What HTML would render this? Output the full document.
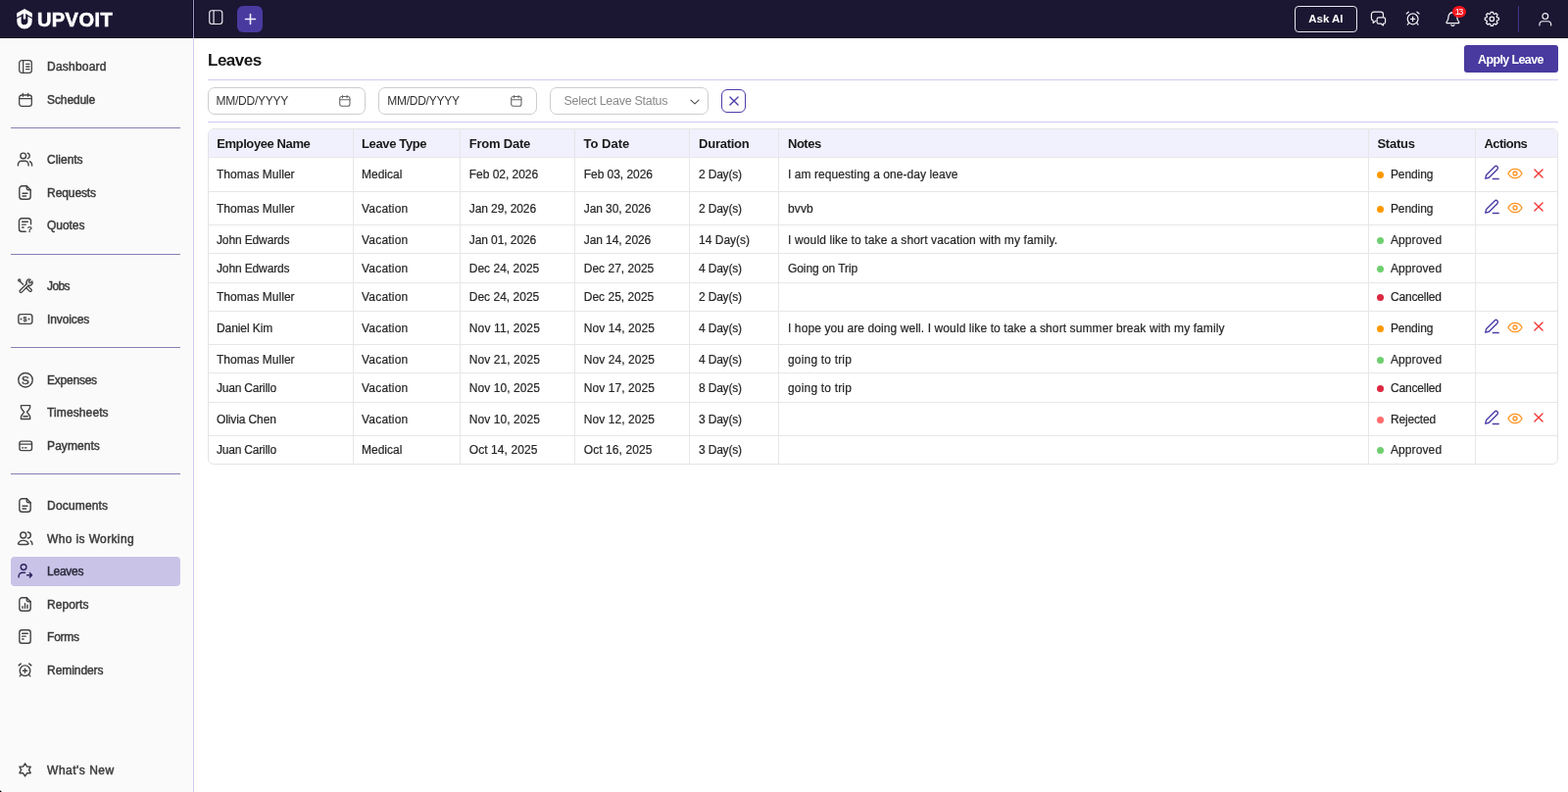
<!DOCTYPE html>
<html lang="en"><head><meta charset="utf-8"><title>Leaves</title>
<style>
*{box-sizing:border-box;margin:0;padding:0}
html,body{width:1600px;height:808px;overflow:hidden;background:#fff}
body{font-family:"Liberation Sans",sans-serif;position:relative;color:#222}
#app{position:absolute;left:0;top:0;width:1600px;height:808px;overflow:hidden;will-change:transform}
.t{position:absolute;white-space:nowrap;line-height:20px;height:20px}
#hdr{position:absolute;left:0;top:0;width:1600px;height:39px;background:#1b1632}
#hdrb{position:absolute;left:0;top:38px;width:1600px;height:1px;background:#07041a}
#side{position:absolute;left:0;top:39px;width:198px;height:769px;background:#fafafa;border-right:1px solid #cfccf0}
.hsep{position:absolute;left:196px;top:0;width:3px;height:39px;background:#9d99cc;border-left:1px solid #0b0820;border-right:1px solid #0b0820}
.div{position:absolute;left:11px;width:173px;height:1.4px;background:#8781b6}
.nav{position:absolute;left:11px;width:173px;height:30px;border-radius:4px}
.nav.on{background:#c9c3e8}
.ico{position:absolute;display:block;overflow:visible}
.line{position:absolute;left:212px;width:1378px;height:1px;background:#cfcbf2}
.inp{position:absolute;top:89px;height:28px;width:161px;border:1px solid #cdcdcd;border-radius:7px;background:#fff}
#tbl{position:absolute;left:212px;top:131px;width:1378px;height:343px;border:1px solid #e4e4e7;border-radius:6px;overflow:hidden;background:#fff}
#thd{position:absolute;left:0;top:0;width:1378px;height:29px;background:#f1f0fd}
.vl{position:absolute;width:1px;background:#e7e7e9;top:131px;height:343px}
.hl{position:absolute;height:1px;background:#e7e7e9;left:212px;width:1378px}
.dot{position:absolute;width:7px;height:7px;border-radius:50%}
.btn{position:absolute;border-radius:4px}
.sb{-webkit-text-stroke:0.25px currentColor}
</style></head><body><div id="app">
<header><div id="hdr"></div><div id="hdrb"></div><div class="hsep"></div>
<svg class="ico" style="left:17px;top:8.7px" width="16" height="21" viewBox="0 0 16 21"><path d="M2.45 5V12.9A5.55 5.55 0 0 0 13.55 12.9V5" fill="none" stroke="#fff" stroke-width="4.3"/><path d="M-0.5 9.7L8 5.1L16.5 9.7" fill="none" stroke="#1b1632" stroke-width="1.2"/><path d="M8 0L15.7 4.3V8.5L8 4.3L0.3 8.5V4.3z" fill="#fff"/><rect x="6.8" y="3" width="2.4" height="7.6" rx="0.6" fill="#fff"/></svg>
<div class="t" style="left:37.9px;top:10px;font-size:20px;color:#fff;font-weight:700;letter-spacing:0.468px;-webkit-text-stroke:0.6px #fff;">UPVOIT</div><svg class="ico" style="left:211.7px;top:9.3px;color:#ececf2" width="16.5" height="16.5" viewBox="0 0 24 24" fill="none" stroke="#ececf2" stroke-width="1.7" stroke-linecap="round" stroke-linejoin="round"><rect x="2.5" y="2.5" width="19" height="20" rx="3.5"/><path d="M8.8 2.5v20"/></svg>
<div class="btn" style="left:242px;top:6px;width:26px;height:27px;background:#493a9f;border-radius:6px"></div><svg class="ico" style="left:249.7px;top:13.8px" width="11" height="11" viewBox="0 0 11 11" stroke="#f1eeff" stroke-width="1.6" stroke-linecap="round"><path d="M5.5 0.5v10M0.5 5.5h10"/></svg>
<div class="btn" style="left:1320.5px;top:6px;width:64.5px;height:27px;border:1px solid #e8e8ee;border-radius:4px"></div><div class="t" style="left:1335.3px;top:9px;font-size:11.5px;color:#fff;font-weight:700;letter-spacing:-0.032px;">Ask AI</div><svg class="ico" style="left:1398.4px;top:10.3px;color:#f2f2f6" width="17" height="17" viewBox="0 0 24 24" fill="none" stroke="#f2f2f6" stroke-width="1.7" stroke-linecap="round" stroke-linejoin="round"><path d="M8.500 16H8l-3.500 3v-3.500A3.500 3.500 0 0 1 2 12.500v-6A3.500 3.500 0 0 1 5.500 3h10A3.500 3.500 0 0 1 19 6.500V10"/><path d="M12.500 11h7a2.500 2.500 0 0 1 2.500 2.500v4a2.500 2.500 0 0 1-2.500 2.500h-.5v2.500l-3-2.500h-3.500a2.500 2.500 0 0 1-2.500-2.500v-4a2.500 2.500 0 0 1 2.500-2.500z"/></svg><svg class="ico" style="left:1433.2px;top:10.4px;color:#f2f2f6" width="17.3" height="17.3" viewBox="0 0 24 24" fill="none" stroke="#f2f2f6" stroke-width="1.7" stroke-linecap="round" stroke-linejoin="round"><circle cx="12" cy="13" r="7.500"/><path d="M12 10v6M9 13h6M3 5.500L6 3M21 5.500L18 3M6.500 18.500L4.500 21M17.500 18.500l2 2.500"/></svg><svg class="ico" style="left:1474px;top:10.6px;color:#f2f2f6" width="16.8" height="16.8" viewBox="0 0 24 24" fill="none" stroke="#f2f2f6" stroke-width="1.8" stroke-linecap="round" stroke-linejoin="round"><path d="M12 2.500a6.300 6.300 0 0 0-6.300 6.300c0 4.200-1.200 5.800-2.600 7.400-.6.700-.2 1.800.8 1.800h16.200c1 0 1.400-1.100.8-1.800-1.400-1.600-2.600-3.200-2.600-7.400A6.300 6.300 0 0 0 12 2.500z"/><path d="M9.800 20.500a2.300 2.300 0 0 0 4.400 0"/></svg><div class="btn" style="left:1482.1px;top:5.6px;width:13.7px;height:12.4px;border-radius:50%;background:#f5141c"></div><div class="t" style="left:1484.7px;top:2px;font-size:9px;color:#fff;letter-spacing:-1.408px;">13</div><svg class="ico" style="left:1513.9px;top:11.1px;color:#f2f2f6" width="16.7" height="16.7" viewBox="0 0 24 24" fill="none" stroke="#f2f2f6" stroke-width="1.8" stroke-linecap="round" stroke-linejoin="round"><circle cx="12" cy="12" r="3.2"/><path d="M10.33 1.94A10.2 10.2 0 0 1 13.67 1.94L14.17 4.30A8.0 8.0 0 0 1 15.91 5.02L17.93 3.70A10.2 10.2 0 0 1 20.30 6.07L18.98 8.09A8.0 8.0 0 0 1 19.70 9.83L22.06 10.33A10.2 10.2 0 0 1 22.06 13.67L19.70 14.17A8.0 8.0 0 0 1 18.98 15.91L20.30 17.93A10.2 10.2 0 0 1 17.93 20.30L15.91 18.98A8.0 8.0 0 0 1 14.17 19.70L13.67 22.06A10.2 10.2 0 0 1 10.33 22.06L9.83 19.70A8.0 8.0 0 0 1 8.09 18.98L6.07 20.30A10.2 10.2 0 0 1 3.70 17.93L5.02 15.91A8.0 8.0 0 0 1 4.30 14.17L1.94 13.67A10.2 10.2 0 0 1 1.94 10.33L4.30 9.83A8.0 8.0 0 0 1 5.02 8.09L3.70 6.07A10.2 10.2 0 0 1 6.07 3.70L8.09 5.02A8.0 8.0 0 0 1 9.83 4.30z"/></svg><div class="btn" style="left:1549px;top:6px;width:1px;height:27px;background:#3f3787;border-radius:0"></div><svg class="ico" style="left:1568.7px;top:11.5px;color:#f2f2f6" width="15.6" height="15.6" viewBox="0 0 24 24" fill="none" stroke="#f2f2f6" stroke-width="1.8" stroke-linecap="round" stroke-linejoin="round"><circle cx="12" cy="7" r="4.500"/><path d="M3 21.500V20a5 5 0 0 1 5-5h8a5 5 0 0 1 5 5v1.500"/></svg>
</header>
<nav><div id="side"></div>
<div class="div" style="top:129.6px"></div><div class="div" style="top:258.6px"></div><div class="div" style="top:353.6px"></div><div class="div" style="top:482.6px"></div>
<svg class="ico" style="left:18px;top:60px;color:#444" width="16" height="16" viewBox="0 0 24 24" fill="none" stroke="#444" stroke-width="1.9" stroke-linecap="round" stroke-linejoin="round"><rect x="2.5" y="2.5" width="19" height="19" rx="4"/><path d="M8.5 2.5v19M13 8h5M13 12h5M13 16h5"/></svg><div class="t" style="left:48.1px;top:58px;font-size:12px;color:#3a3a3a;letter-spacing:0.212px;-webkit-text-stroke:0.45px currentColor;">Dashboard</div>
<svg class="ico" style="left:18px;top:93.5px;color:#444" width="16" height="16" viewBox="0 0 24 24" fill="none" stroke="#444" stroke-width="1.9" stroke-linecap="round" stroke-linejoin="round"><rect x="2.5" y="4.5" width="19" height="17" rx="4"/><path d="M2.5 10h19M8 2v4.5M16 2v4.5"/></svg><div class="t" style="left:48.1px;top:92px;font-size:12px;color:#3a3a3a;letter-spacing:-0.120px;-webkit-text-stroke:0.45px currentColor;">Schedule</div>
<svg class="ico" style="left:17.3px;top:154.3px;color:#444" width="17" height="17" viewBox="0 0 24 24" fill="none" stroke="#444" stroke-width="2" stroke-linecap="round" stroke-linejoin="round"><circle cx="9.5" cy="7" r="4"/><path d="M2 21v-1.5a5 5 0 0 1 5-5h5a5 5 0 0 1 5 5V21"/><path d="M16 3.2a4 4 0 0 1 0 7.6M22 21v-1.5a5 5 0 0 0-3-4.3"/></svg><div class="t" style="left:48.1px;top:153px;font-size:12px;color:#3a3a3a;letter-spacing:-0.031px;-webkit-text-stroke:0.45px currentColor;">Clients</div>
<svg class="ico" style="left:17.3px;top:187.8px;color:#444" width="17" height="17" viewBox="0 0 24 24" fill="none" stroke="#444" stroke-width="2" stroke-linecap="round" stroke-linejoin="round"><path d="M14.500 2.500H8a4 4 0 0 0-4 4v11a4 4 0 0 0 4 4h8a4 4 0 0 0 4-4V8z"/><path d="M14.500 2.500V6a2 2 0 0 0 2 2H20M8.500 13h7M8.500 17h5"/></svg><div class="t" style="left:48.1px;top:187px;font-size:12px;color:#3a3a3a;letter-spacing:-0.100px;-webkit-text-stroke:0.45px currentColor;">Requests</div>
<svg class="ico" style="left:17.3px;top:221.3px;color:#444" width="17" height="17" viewBox="0 0 24 24" fill="none" stroke="#444" stroke-width="2" stroke-linecap="round" stroke-linejoin="round"><path d="M13 21.500H7.500a4 4 0 0 1-4-4v-11a4 4 0 0 1 4-4h9a4 4 0 0 1 4 4V11"/><path d="M8 7.500h8M8 11.500h5M8 15.500h2"/><text x="18.8" y="23.2" font-size="12" font-weight="700" text-anchor="middle" fill="currentColor" stroke="currentColor" stroke-width="0.2" font-family="Liberation Sans,sans-serif">?</text></svg><div class="t" style="left:48.1px;top:220px;font-size:12px;color:#3a3a3a;letter-spacing:-0.078px;-webkit-text-stroke:0.45px currentColor;">Quotes</div>
<svg class="ico" style="left:17.3px;top:283.3px;color:#444" width="17" height="17" viewBox="0 0 24 24" fill="none" stroke="#444" stroke-width="2" stroke-linecap="round" stroke-linejoin="round"><g transform="translate(0.9 0.4) scale(0.93)"><path d="M14.700 9.300l-10.500 10.500a1.900 1.900 0 0 0 2.700 2.700l10.500-10.500"/><path d="M14.700 9.300a4.500 4.500 0 0 1 5.800-6.300l-3 3 1.500 1.500 1 1 3-3a4.500 4.500 0 0 1-5.600 6.300"/><path d="M13.500 15.500l5.500 5.500a1.900 1.900 0 0 0 2.700-2.700l-5.200-5.300M9 10.500L4.500 6"/><circle cx="3.200" cy="4.200" r="1.700"/></g></svg><div class="t" style="left:48.1px;top:282px;font-size:12px;color:#3a3a3a;letter-spacing:-0.648px;-webkit-text-stroke:0.45px currentColor;">Jobs</div>
<svg class="ico" style="left:17.3px;top:316.8px;color:#444" width="17" height="17" viewBox="0 0 24 24" fill="none" stroke="#444" stroke-width="2" stroke-linecap="round" stroke-linejoin="round"><rect x="2.6" y="5.1" width="19.8" height="13.8" rx="3.2"/><text x="12.1" y="15.9" font-size="10.5" font-weight="700" text-anchor="middle" fill="currentColor" stroke="currentColor" stroke-width="0.2" font-family="Liberation Sans,sans-serif">$</text><path d="M6.300 12h.01M17.700 12h.01" stroke-width="2.6"/></svg><div class="t" style="left:48.1px;top:316px;font-size:12px;color:#3a3a3a;letter-spacing:-0.131px;-webkit-text-stroke:0.45px currentColor;">Invoices</div>
<svg class="ico" style="left:17.3px;top:378.8px;color:#444" width="17" height="17" viewBox="0 0 24 24" fill="none" stroke="#444" stroke-width="2" stroke-linecap="round" stroke-linejoin="round"><circle cx="12.7" cy="12.3" r="10.2"/><text x="12.7" y="18.1" font-size="16.5" font-weight="400" text-anchor="middle" fill="currentColor" stroke="currentColor" stroke-width="0.7" font-family="Liberation Sans,sans-serif">S</text></svg><div class="t" style="left:48.1px;top:378px;font-size:12px;color:#3a3a3a;letter-spacing:-0.243px;-webkit-text-stroke:0.45px currentColor;">Expenses</div>
<svg class="ico" style="left:17.3px;top:412.3px;color:#444" width="17" height="17" viewBox="0 0 24 24" fill="none" stroke="#444" stroke-width="2" stroke-linecap="round" stroke-linejoin="round"><g transform="translate(0.8 0)"><path d="M5.500 2.300h13v2.700c0 2.500-3 4.500-4.500 7 1.500 2.500 4.500 4.500 4.500 7v2.900h-13V19c0-2.500 3-4.500 4.500-7-1.500-2.500-4.500-4.500-4.500-7z"/><path d="M9 18h6"/></g></svg><div class="t" style="left:48.1px;top:411px;font-size:12px;color:#3a3a3a;letter-spacing:0.103px;-webkit-text-stroke:0.45px currentColor;">Timesheets</div>
<svg class="ico" style="left:17.3px;top:445.8px;color:#444" width="17" height="17" viewBox="0 0 24 24" fill="none" stroke="#444" stroke-width="2" stroke-linecap="round" stroke-linejoin="round"><rect x="4.2" y="5.8" width="17.7" height="13.4" rx="2.8"/><path d="M4.2 10h17.7M7.800 15.300h1.800M12 15.300h2.200"/></svg><div class="t" style="left:48.1px;top:445px;font-size:12px;color:#3a3a3a;letter-spacing:0.050px;-webkit-text-stroke:0.45px currentColor;">Payments</div>
<svg class="ico" style="left:17.3px;top:507.3px;color:#444" width="17" height="17" viewBox="0 0 24 24" fill="none" stroke="#444" stroke-width="2" stroke-linecap="round" stroke-linejoin="round"><path d="M14.500 2.500H8a4 4 0 0 0-4 4v11a4 4 0 0 0 4 4h8a4 4 0 0 0 4-4V8z"/><path d="M14.500 2.500V6a2 2 0 0 0 2 2H20M8.500 13h7M8.500 17h5"/></svg><div class="t" style="left:48.1px;top:506px;font-size:12px;color:#3a3a3a;letter-spacing:0.163px;-webkit-text-stroke:0.45px currentColor;">Documents</div>
<svg class="ico" style="left:17.3px;top:540.8px;color:#444" width="17" height="17" viewBox="0 0 24 24" fill="none" stroke="#444" stroke-width="2" stroke-linecap="round" stroke-linejoin="round"><circle cx="9.5" cy="7" r="4.2"/><path d="M2 19.5c1-3.2 4-4.8 7.500-4.800s6.500 1.600 7.500 4.800c-2 1.400-13 1.400-15 0z"/><path d="M16 2.800a4.200 4.200 0 0 1 0 8.400M20 15.500a5 5 0 0 1 2.500 5"/></svg><div class="t" style="left:48.1px;top:540px;font-size:12px;color:#3a3a3a;letter-spacing:0.362px;-webkit-text-stroke:0.45px currentColor;">Who is Working</div>
<div class="nav on" style="top:568px"></div><svg class="ico" style="left:17.3px;top:574.3px;color:#2d2660" width="17" height="17" viewBox="0 0 24 24" fill="none" stroke="#2d2660" stroke-width="2" stroke-linecap="round" stroke-linejoin="round"><circle cx="10" cy="6.500" r="4"/><path d="M3 21v-1.500a5 5 0 0 1 5-5h4M15 18h7M19 15l3 3-3 3"/></svg><div class="t" style="left:48.1px;top:573px;font-size:12px;color:#2a2a3a;letter-spacing:-0.260px;-webkit-text-stroke:0.45px currentColor;">Leaves</div>
<svg class="ico" style="left:17.3px;top:607.8px;color:#444" width="17" height="17" viewBox="0 0 24 24" fill="none" stroke="#444" stroke-width="2" stroke-linecap="round" stroke-linejoin="round"><path d="M14.500 2.500H8a4 4 0 0 0-4 4v11a4 4 0 0 0 4 4h8a4 4 0 0 0 4-4V8z"/><path d="M14.500 2.500V6a2 2 0 0 0 2 2H20M8.500 17.500V15M12 17.500V11M15.500 17.500V13"/></svg><div class="t" style="left:48.1px;top:607px;font-size:12px;color:#3a3a3a;letter-spacing:0.048px;-webkit-text-stroke:0.45px currentColor;">Reports</div>
<svg class="ico" style="left:17.3px;top:641.3px;color:#444" width="17" height="17" viewBox="0 0 24 24" fill="none" stroke="#444" stroke-width="2" stroke-linecap="round" stroke-linejoin="round"><rect x="4" y="2.500" width="16" height="19" rx="3.500"/><path d="M8 7.500h8M8 11.500h5M8 15.500h2"/></svg><div class="t" style="left:48.1px;top:640px;font-size:12px;color:#3a3a3a;letter-spacing:-0.249px;-webkit-text-stroke:0.45px currentColor;">Forms</div>
<svg class="ico" style="left:17.3px;top:674.8px;color:#444" width="17" height="17" viewBox="0 0 24 24" fill="none" stroke="#444" stroke-width="2" stroke-linecap="round" stroke-linejoin="round"><circle cx="12" cy="13" r="7.500"/><path d="M12 10v6M9 13h6M3 5.500L6 3M21 5.500L18 3M6.500 18.500L4.500 21M17.500 18.500l2 2.500"/></svg><div class="t" style="left:48.1px;top:674px;font-size:12px;color:#3a3a3a;letter-spacing:-0.078px;-webkit-text-stroke:0.45px currentColor;">Reminders</div>
<svg class="ico" style="left:17.3px;top:776.8px;color:#444" width="17" height="17" viewBox="0 0 24 24" fill="none" stroke="#444" stroke-width="2" stroke-linecap="round" stroke-linejoin="round"><path d="M12.10 2.70L14.85 7.14L20.07 7.30L17.60 11.90L20.07 16.50L14.85 16.66L12.10 21.10L9.35 16.66L4.13 16.50L6.60 11.90L4.13 7.30L9.35 7.14z"/></svg><div class="t" style="left:48.1px;top:776px;font-size:12px;color:#3a3a3a;letter-spacing:0.492px;-webkit-text-stroke:0.45px currentColor;">What's New</div>
<div style="position:absolute;left:0;top:805px;width:3px;height:3px;background:radial-gradient(circle at 100% 0,rgba(0,0,0,0) 2.6px,#000 3.4px)"></div>
</nav>
<main><div class="t" style="left:212.1px;top:52px;font-size:17px;color:#151515;font-weight:700;letter-spacing:-0.533px;">Leaves</div><div class="btn" style="left:1494px;top:46px;width:96px;height:28px;background:#483a9f;border-radius:3px"></div><div class="t" style="left:1508px;top:51px;font-size:12.5px;color:#fff;font-weight:700;letter-spacing:-0.614px;">Apply Leave</div><div class="line" style="top:81px"></div><div class="line" style="top:124px"></div>
<div class="inp" style="left:212px;width:161px"></div><div class="inp" style="left:386px;width:162px"></div><div class="inp" style="left:561px;width:162px"></div><div class="t" style="left:220.6px;top:93px;font-size:12px;color:#333;letter-spacing:-0.268px;">MM/DD/YYYY</div><div class="t" style="left:395.3px;top:93px;font-size:12px;color:#333;letter-spacing:-0.268px;">MM/DD/YYYY</div><svg class="ico" style="left:345.2px;top:96px;color:#666" width="13.7" height="13.7" viewBox="0 0 24 24" fill="none" stroke="#666" stroke-width="1.9" stroke-linecap="round" stroke-linejoin="round"><rect x="3" y="4.500" width="18" height="17" rx="3.500"/><path d="M3 10h18M8 2.500v4M16 2.500v4"/></svg><svg class="ico" style="left:519.9px;top:96px;color:#666" width="13.7" height="13.7" viewBox="0 0 24 24" fill="none" stroke="#666" stroke-width="1.9" stroke-linecap="round" stroke-linejoin="round"><rect x="3" y="4.500" width="18" height="17" rx="3.500"/><path d="M3 10h18M8 2.500v4M16 2.500v4"/></svg><div class="t" style="left:575.5px;top:93px;font-size:12.5px;color:#8a8a8a;letter-spacing:-0.288px;">Select Leave Status</div><svg class="ico" style="left:702.4px;top:97.1px;color:#555" width="14" height="14" viewBox="0 0 24 24" fill="none" stroke="#555" stroke-width="2.1" stroke-linecap="round" stroke-linejoin="round"><path d="M5.1 8.7l6.9 6.6 6.9-6.6"/></svg><div class="btn" style="left:736px;top:91px;width:25px;height:24px;border:1px solid #4a3da8;border-radius:6px;background:#fff"></div><svg class="ico" style="left:741.6px;top:95.9px;color:#4a3da8" width="14" height="14" viewBox="0 0 24 24" fill="none" stroke="#4a3da8" stroke-width="2.3" stroke-linecap="round" stroke-linejoin="round"><path d="M5 5l14 14M19 5L5 19"/></svg>
<div id="tbl"><div id="thd"></div></div>
<div class="vl" style="left:360px"></div><div class="vl" style="left:469px"></div><div class="vl" style="left:586px"></div><div class="vl" style="left:703px"></div><div class="vl" style="left:794px"></div><div class="vl" style="left:1396px"></div><div class="vl" style="left:1505px"></div><div class="hl" style="top:160px"></div><div class="hl" style="top:195px"></div><div class="hl" style="top:229px"></div><div class="hl" style="top:258px"></div><div class="hl" style="top:288px"></div><div class="hl" style="top:317px"></div><div class="hl" style="top:351px"></div><div class="hl" style="top:380px"></div><div class="hl" style="top:410px"></div><div class="hl" style="top:444px"></div>
<div class="t" style="left:221.2px;top:137px;font-size:13px;color:#1a1a1a;font-weight:700;letter-spacing:-0.403px;">Employee Name</div><div class="t" style="left:369px;top:137px;font-size:13px;color:#1a1a1a;font-weight:700;letter-spacing:-0.361px;">Leave Type</div><div class="t" style="left:478.75px;top:137px;font-size:13px;color:#1a1a1a;font-weight:700;letter-spacing:-0.223px;">From Date</div><div class="t" style="left:595.5px;top:137px;font-size:13px;color:#1a1a1a;font-weight:700;">To Date</div><div class="t" style="left:713.1px;top:137px;font-size:13px;color:#1a1a1a;font-weight:700;letter-spacing:-0.263px;">Duration</div><div class="t" style="left:804px;top:137px;font-size:13px;color:#1a1a1a;font-weight:700;letter-spacing:-0.503px;">Notes</div><div class="t" style="left:1405.4px;top:137px;font-size:13px;color:#1a1a1a;font-weight:700;letter-spacing:-0.226px;">Status</div><div class="t" style="left:1514.5px;top:137px;font-size:13px;color:#1a1a1a;font-weight:700;letter-spacing:-0.562px;">Actions</div>
<div class="t" style="left:221px;top:168px;font-size:12px;color:#262626;letter-spacing:0.020px;-webkit-text-stroke:0.2px currentColor;">Thomas Muller</div><div class="t" style="left:369px;top:168px;font-size:12px;color:#262626;letter-spacing:0.008px;-webkit-text-stroke:0.2px currentColor;">Medical</div><div class="t" style="left:478.75px;top:168px;font-size:12px;color:#262626;letter-spacing:-0.034px;-webkit-text-stroke:0.2px currentColor;">Feb 02, 2026</div><div class="t" style="left:595.75px;top:168px;font-size:12px;color:#262626;letter-spacing:-0.048px;-webkit-text-stroke:0.2px currentColor;">Feb 03, 2026</div><div class="t" style="left:713.1px;top:168px;font-size:12px;color:#262626;letter-spacing:-0.205px;-webkit-text-stroke:0.2px currentColor;">2 Day(s)</div><div class="t" style="left:804px;top:168px;font-size:12px;color:#262626;letter-spacing:0.069px;-webkit-text-stroke:0.2px currentColor;">I am requesting a one-day leave</div><div class="dot" style="left:1405px;top:174.7px;background:#ff9800"></div><div class="t" style="left:1418.9px;top:168px;font-size:12px;color:#262626;letter-spacing:-0.073px;-webkit-text-stroke:0.2px currentColor;">Pending</div><svg class="ico" style="left:1514.3px;top:168.4px;color:#4a3da8" width="16.6" height="16.6" viewBox="0 0 24 24" fill="none" stroke="#4a3da8" stroke-width="2" stroke-linecap="round" stroke-linejoin="round"><path d="M2.500 20.500l1.300-5.200L16.200 2.900a2.750 2.750 0 0 1 3.900 3.900L7.700 19.200z"/><path d="M13.500 21h8.500"/></svg><svg class="ico" style="left:1538.2px;top:169px;color:#ff9320" width="16" height="16" viewBox="0 0 24 24" fill="none" stroke="#ff9320" stroke-width="1.9" stroke-linecap="round" stroke-linejoin="round"><path d="M1.500 12C3.500 7.700 7.500 5 12 5s8.500 2.700 10.500 7c-2 4.300-6 7-10.500 7S3.500 16.300 1.500 12z"/><circle cx="12" cy="12" r="3"/></svg><svg class="ico" style="left:1563px;top:169.5px;color:#f03a3a" width="14" height="14" viewBox="0 0 24 24" fill="none" stroke="#f03a3a" stroke-width="2.4" stroke-linecap="round" stroke-linejoin="round"><path d="M5 5l14 14M19 5L5 19"/></svg>
<div class="t" style="left:221px;top:203px;font-size:12px;color:#262626;letter-spacing:0.020px;-webkit-text-stroke:0.2px currentColor;">Thomas Muller</div><div class="t" style="left:369px;top:203px;font-size:12px;color:#262626;letter-spacing:0.207px;-webkit-text-stroke:0.2px currentColor;">Vacation</div><div class="t" style="left:478.75px;top:203px;font-size:12px;color:#262626;letter-spacing:-0.095px;-webkit-text-stroke:0.2px currentColor;">Jan 29, 2026</div><div class="t" style="left:595.75px;top:203px;font-size:12px;color:#262626;letter-spacing:-0.081px;-webkit-text-stroke:0.2px currentColor;">Jan 30, 2026</div><div class="t" style="left:713.1px;top:203px;font-size:12px;color:#262626;letter-spacing:-0.205px;-webkit-text-stroke:0.2px currentColor;">2 Day(s)</div><div class="t" style="left:804px;top:203px;font-size:12px;color:#262626;letter-spacing:0.119px;-webkit-text-stroke:0.2px currentColor;">bvvb</div><div class="dot" style="left:1405px;top:209.7px;background:#ff9800"></div><div class="t" style="left:1418.9px;top:203px;font-size:12px;color:#262626;letter-spacing:-0.073px;-webkit-text-stroke:0.2px currentColor;">Pending</div><svg class="ico" style="left:1514.3px;top:202.9px;color:#4a3da8" width="16.6" height="16.6" viewBox="0 0 24 24" fill="none" stroke="#4a3da8" stroke-width="2" stroke-linecap="round" stroke-linejoin="round"><path d="M2.500 20.500l1.300-5.200L16.200 2.900a2.750 2.750 0 0 1 3.900 3.900L7.700 19.200z"/><path d="M13.500 21h8.500"/></svg><svg class="ico" style="left:1538.2px;top:203.5px;color:#ff9320" width="16" height="16" viewBox="0 0 24 24" fill="none" stroke="#ff9320" stroke-width="1.9" stroke-linecap="round" stroke-linejoin="round"><path d="M1.500 12C3.500 7.700 7.500 5 12 5s8.500 2.700 10.500 7c-2 4.300-6 7-10.500 7S3.500 16.300 1.500 12z"/><circle cx="12" cy="12" r="3"/></svg><svg class="ico" style="left:1563px;top:204px;color:#f03a3a" width="14" height="14" viewBox="0 0 24 24" fill="none" stroke="#f03a3a" stroke-width="2.4" stroke-linecap="round" stroke-linejoin="round"><path d="M5 5l14 14M19 5L5 19"/></svg>
<div class="t" style="left:221px;top:235px;font-size:12px;color:#262626;letter-spacing:-0.131px;-webkit-text-stroke:0.2px currentColor;">John Edwards</div><div class="t" style="left:369px;top:235px;font-size:12px;color:#262626;letter-spacing:0.207px;-webkit-text-stroke:0.2px currentColor;">Vacation</div><div class="t" style="left:478.75px;top:235px;font-size:12px;color:#262626;letter-spacing:-0.081px;-webkit-text-stroke:0.2px currentColor;">Jan 01, 2026</div><div class="t" style="left:595.75px;top:235px;font-size:12px;color:#262626;letter-spacing:-0.081px;-webkit-text-stroke:0.2px currentColor;">Jan 14, 2026</div><div class="t" style="left:713.1px;top:235px;font-size:12px;color:#262626;-webkit-text-stroke:0.2px currentColor;">14 Day(s)</div><div class="t" style="left:804px;top:235px;font-size:12px;color:#262626;letter-spacing:0.139px;-webkit-text-stroke:0.2px currentColor;">I would like to take a short vacation with my family.</div><div class="dot" style="left:1405px;top:241.7px;background:#6fcf70"></div><div class="t" style="left:1418.9px;top:235px;font-size:12px;color:#262626;letter-spacing:0.118px;-webkit-text-stroke:0.2px currentColor;">Approved</div>
<div class="t" style="left:221px;top:264px;font-size:12px;color:#262626;letter-spacing:-0.131px;-webkit-text-stroke:0.2px currentColor;">John Edwards</div><div class="t" style="left:369px;top:264px;font-size:12px;color:#262626;letter-spacing:0.207px;-webkit-text-stroke:0.2px currentColor;">Vacation</div><div class="t" style="left:478.75px;top:264px;font-size:12px;color:#262626;letter-spacing:0.010px;-webkit-text-stroke:0.2px currentColor;">Dec 24, 2025</div><div class="t" style="left:595.75px;top:264px;font-size:12px;color:#262626;letter-spacing:0.010px;-webkit-text-stroke:0.2px currentColor;">Dec 27, 2025</div><div class="t" style="left:713.1px;top:264px;font-size:12px;color:#262626;letter-spacing:-0.205px;-webkit-text-stroke:0.2px currentColor;">4 Day(s)</div><div class="t" style="left:804px;top:264px;font-size:12px;color:#262626;letter-spacing:-0.070px;-webkit-text-stroke:0.2px currentColor;">Going on Trip</div><div class="dot" style="left:1405px;top:270.7px;background:#6fcf70"></div><div class="t" style="left:1418.9px;top:264px;font-size:12px;color:#262626;letter-spacing:0.118px;-webkit-text-stroke:0.2px currentColor;">Approved</div>
<div class="t" style="left:221px;top:293px;font-size:12px;color:#262626;letter-spacing:0.020px;-webkit-text-stroke:0.2px currentColor;">Thomas Muller</div><div class="t" style="left:369px;top:293px;font-size:12px;color:#262626;letter-spacing:0.207px;-webkit-text-stroke:0.2px currentColor;">Vacation</div><div class="t" style="left:478.75px;top:293px;font-size:12px;color:#262626;letter-spacing:0.010px;-webkit-text-stroke:0.2px currentColor;">Dec 24, 2025</div><div class="t" style="left:595.75px;top:293px;font-size:12px;color:#262626;letter-spacing:0.010px;-webkit-text-stroke:0.2px currentColor;">Dec 25, 2025</div><div class="t" style="left:713.1px;top:293px;font-size:12px;color:#262626;letter-spacing:-0.205px;-webkit-text-stroke:0.2px currentColor;">2 Day(s)</div><div class="dot" style="left:1405px;top:299.7px;background:#dc2840"></div><div class="t" style="left:1418.9px;top:293px;font-size:12px;color:#262626;letter-spacing:-0.158px;-webkit-text-stroke:0.2px currentColor;">Cancelled</div>
<div class="t" style="left:221px;top:325px;font-size:12px;color:#262626;letter-spacing:-0.080px;-webkit-text-stroke:0.2px currentColor;">Daniel Kim</div><div class="t" style="left:369px;top:325px;font-size:12px;color:#262626;letter-spacing:0.207px;-webkit-text-stroke:0.2px currentColor;">Vacation</div><div class="t" style="left:478.75px;top:325px;font-size:12px;color:#262626;letter-spacing:0.145px;-webkit-text-stroke:0.2px currentColor;">Nov 11, 2025</div><div class="t" style="left:595.75px;top:325px;font-size:12px;color:#262626;letter-spacing:0.065px;-webkit-text-stroke:0.2px currentColor;">Nov 14, 2025</div><div class="t" style="left:713.1px;top:325px;font-size:12px;color:#262626;letter-spacing:-0.205px;-webkit-text-stroke:0.2px currentColor;">4 Day(s)</div><div class="t" style="left:804px;top:325px;font-size:12px;color:#262626;letter-spacing:0.097px;-webkit-text-stroke:0.2px currentColor;">I hope you are doing well. I would like to take a short summer break with my family</div><div class="dot" style="left:1405px;top:331.7px;background:#ff9800"></div><div class="t" style="left:1418.9px;top:325px;font-size:12px;color:#262626;letter-spacing:-0.073px;-webkit-text-stroke:0.2px currentColor;">Pending</div><svg class="ico" style="left:1514.3px;top:324.9px;color:#4a3da8" width="16.6" height="16.6" viewBox="0 0 24 24" fill="none" stroke="#4a3da8" stroke-width="2" stroke-linecap="round" stroke-linejoin="round"><path d="M2.500 20.500l1.300-5.200L16.200 2.900a2.750 2.750 0 0 1 3.900 3.900L7.700 19.200z"/><path d="M13.500 21h8.500"/></svg><svg class="ico" style="left:1538.2px;top:325.5px;color:#ff9320" width="16" height="16" viewBox="0 0 24 24" fill="none" stroke="#ff9320" stroke-width="1.9" stroke-linecap="round" stroke-linejoin="round"><path d="M1.500 12C3.500 7.700 7.500 5 12 5s8.500 2.700 10.500 7c-2 4.300-6 7-10.500 7S3.500 16.300 1.500 12z"/><circle cx="12" cy="12" r="3"/></svg><svg class="ico" style="left:1563px;top:326px;color:#f03a3a" width="14" height="14" viewBox="0 0 24 24" fill="none" stroke="#f03a3a" stroke-width="2.4" stroke-linecap="round" stroke-linejoin="round"><path d="M5 5l14 14M19 5L5 19"/></svg>
<div class="t" style="left:221px;top:357px;font-size:12px;color:#262626;letter-spacing:0.020px;-webkit-text-stroke:0.2px currentColor;">Thomas Muller</div><div class="t" style="left:369px;top:357px;font-size:12px;color:#262626;letter-spacing:0.207px;-webkit-text-stroke:0.2px currentColor;">Vacation</div><div class="t" style="left:478.75px;top:357px;font-size:12px;color:#262626;letter-spacing:0.065px;-webkit-text-stroke:0.2px currentColor;">Nov 21, 2025</div><div class="t" style="left:595.75px;top:357px;font-size:12px;color:#262626;letter-spacing:0.065px;-webkit-text-stroke:0.2px currentColor;">Nov 24, 2025</div><div class="t" style="left:713.1px;top:357px;font-size:12px;color:#262626;letter-spacing:-0.205px;-webkit-text-stroke:0.2px currentColor;">4 Day(s)</div><div class="t" style="left:804px;top:357px;font-size:12px;color:#262626;letter-spacing:0.182px;-webkit-text-stroke:0.2px currentColor;">going to trip</div><div class="dot" style="left:1405px;top:363.7px;background:#6fcf70"></div><div class="t" style="left:1418.9px;top:357px;font-size:12px;color:#262626;letter-spacing:0.118px;-webkit-text-stroke:0.2px currentColor;">Approved</div>
<div class="t" style="left:221px;top:386px;font-size:12px;color:#262626;letter-spacing:-0.205px;-webkit-text-stroke:0.2px currentColor;">Juan Carillo</div><div class="t" style="left:369px;top:386px;font-size:12px;color:#262626;letter-spacing:0.207px;-webkit-text-stroke:0.2px currentColor;">Vacation</div><div class="t" style="left:478.75px;top:386px;font-size:12px;color:#262626;letter-spacing:0.065px;-webkit-text-stroke:0.2px currentColor;">Nov 10, 2025</div><div class="t" style="left:595.75px;top:386px;font-size:12px;color:#262626;letter-spacing:0.065px;-webkit-text-stroke:0.2px currentColor;">Nov 17, 2025</div><div class="t" style="left:713.1px;top:386px;font-size:12px;color:#262626;letter-spacing:-0.205px;-webkit-text-stroke:0.2px currentColor;">8 Day(s)</div><div class="t" style="left:804px;top:386px;font-size:12px;color:#262626;letter-spacing:0.182px;-webkit-text-stroke:0.2px currentColor;">going to trip</div><div class="dot" style="left:1405px;top:392.7px;background:#dc2840"></div><div class="t" style="left:1418.9px;top:386px;font-size:12px;color:#262626;letter-spacing:-0.158px;-webkit-text-stroke:0.2px currentColor;">Cancelled</div>
<div class="t" style="left:221px;top:418px;font-size:12px;color:#262626;letter-spacing:-0.113px;-webkit-text-stroke:0.2px currentColor;">Olivia Chen</div><div class="t" style="left:369px;top:418px;font-size:12px;color:#262626;letter-spacing:0.207px;-webkit-text-stroke:0.2px currentColor;">Vacation</div><div class="t" style="left:478.75px;top:418px;font-size:12px;color:#262626;letter-spacing:0.065px;-webkit-text-stroke:0.2px currentColor;">Nov 10, 2025</div><div class="t" style="left:595.75px;top:418px;font-size:12px;color:#262626;letter-spacing:0.065px;-webkit-text-stroke:0.2px currentColor;">Nov 12, 2025</div><div class="t" style="left:713.1px;top:418px;font-size:12px;color:#262626;letter-spacing:-0.205px;-webkit-text-stroke:0.2px currentColor;">3 Day(s)</div><div class="dot" style="left:1405px;top:424.7px;background:#ff6b6b"></div><div class="t" style="left:1418.9px;top:418px;font-size:12px;color:#262626;letter-spacing:-0.166px;-webkit-text-stroke:0.2px currentColor;">Rejected</div><svg class="ico" style="left:1514.3px;top:417.9px;color:#4a3da8" width="16.6" height="16.6" viewBox="0 0 24 24" fill="none" stroke="#4a3da8" stroke-width="2" stroke-linecap="round" stroke-linejoin="round"><path d="M2.500 20.500l1.300-5.200L16.200 2.900a2.750 2.750 0 0 1 3.900 3.900L7.700 19.200z"/><path d="M13.500 21h8.500"/></svg><svg class="ico" style="left:1538.2px;top:418.5px;color:#ff9320" width="16" height="16" viewBox="0 0 24 24" fill="none" stroke="#ff9320" stroke-width="1.9" stroke-linecap="round" stroke-linejoin="round"><path d="M1.500 12C3.500 7.700 7.500 5 12 5s8.500 2.700 10.500 7c-2 4.300-6 7-10.500 7S3.500 16.300 1.500 12z"/><circle cx="12" cy="12" r="3"/></svg><svg class="ico" style="left:1563px;top:419px;color:#f03a3a" width="14" height="14" viewBox="0 0 24 24" fill="none" stroke="#f03a3a" stroke-width="2.4" stroke-linecap="round" stroke-linejoin="round"><path d="M5 5l14 14M19 5L5 19"/></svg>
<div class="t" style="left:221px;top:449px;font-size:12px;color:#262626;letter-spacing:-0.205px;-webkit-text-stroke:0.2px currentColor;">Juan Carillo</div><div class="t" style="left:369px;top:449px;font-size:12px;color:#262626;letter-spacing:0.008px;-webkit-text-stroke:0.2px currentColor;">Medical</div><div class="t" style="left:478.75px;top:449px;font-size:12px;color:#262626;letter-spacing:0.081px;-webkit-text-stroke:0.2px currentColor;">Oct 14, 2025</div><div class="t" style="left:595.75px;top:449px;font-size:12px;color:#262626;letter-spacing:0.081px;-webkit-text-stroke:0.2px currentColor;">Oct 16, 2025</div><div class="t" style="left:713.1px;top:449px;font-size:12px;color:#262626;letter-spacing:-0.205px;-webkit-text-stroke:0.2px currentColor;">3 Day(s)</div><div class="dot" style="left:1405px;top:455.7px;background:#6fcf70"></div><div class="t" style="left:1418.9px;top:449px;font-size:12px;color:#262626;letter-spacing:0.118px;-webkit-text-stroke:0.2px currentColor;">Approved</div>
</main></div></body></html>
